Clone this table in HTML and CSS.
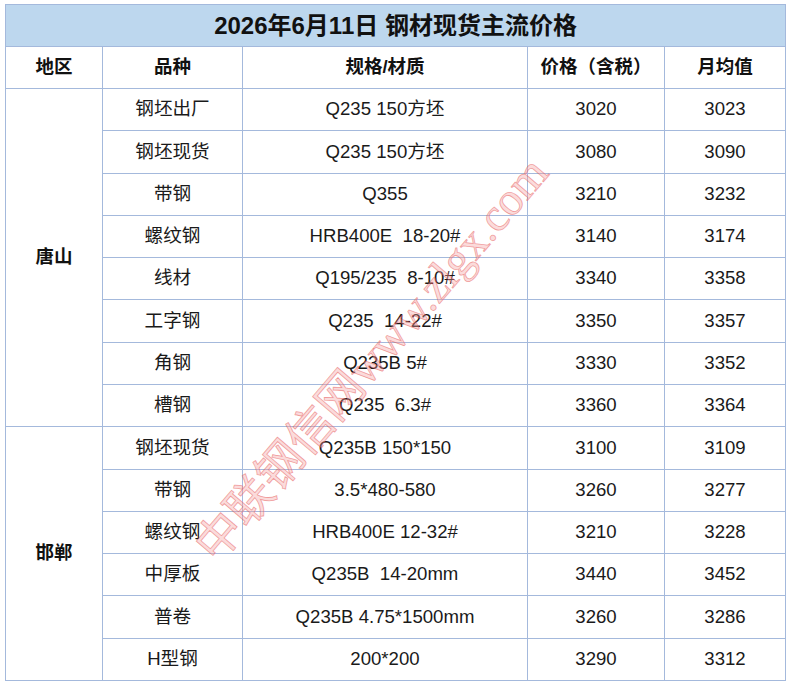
FILE: index.html
```html
<!DOCTYPE html>
<html lang="zh-CN">
<head>
<meta charset="utf-8">
<title>钢材现货主流价格</title>
<link rel="stylesheet" href="styles.css">
</head>
<body>
<div class="sheet">
  <table class="price-table">
    <colgroup>
      <col class="c-area"><col class="c-kind"><col class="c-spec"><col class="c-price"><col class="c-avg">
    </colgroup>
    <tr class="title-row"><td colspan="5">2026年6月11日 钢材现货主流价格</td></tr>
    <tr class="head-row"><td>地区</td><td>品种</td><td>规格/材质</td><td>价格（含税）</td><td>月均值</td></tr>
    <tr><td class="area" rowspan="8">唐山</td><td>钢坯出厂</td><td>Q235 150方坯</td><td>3020</td><td>3023</td></tr>
    <tr><td>钢坯现货</td><td>Q235 150方坯</td><td>3080</td><td>3090</td></tr>
    <tr><td>带钢</td><td>Q355</td><td>3210</td><td>3232</td></tr>
    <tr><td>螺纹钢</td><td>HRB400E  18-20#</td><td>3140</td><td>3174</td></tr>
    <tr><td>线材</td><td>Q195/235  8-10#</td><td>3340</td><td>3358</td></tr>
    <tr><td>工字钢</td><td>Q235  14-22#</td><td>3350</td><td>3357</td></tr>
    <tr><td>角钢</td><td>Q235B 5#</td><td>3330</td><td>3352</td></tr>
    <tr><td>槽钢</td><td>Q235  6.3#</td><td>3360</td><td>3364</td></tr>
    <tr><td class="area" rowspan="6">邯郸</td><td>钢坯现货</td><td>Q235B 150*150</td><td>3100</td><td>3109</td></tr>
    <tr><td>带钢</td><td>3.5*480-580</td><td>3260</td><td>3277</td></tr>
    <tr><td>螺纹钢</td><td>HRB400E 12-32#</td><td>3210</td><td>3228</td></tr>
    <tr><td>中厚板</td><td>Q235B  14-20mm</td><td>3440</td><td>3452</td></tr>
    <tr><td>普卷</td><td>Q235B 4.75*1500mm</td><td>3260</td><td>3286</td></tr>
    <tr><td>H型钢</td><td>200*200</td><td>3290</td><td>3312</td></tr>
  </table>
  <div class="watermark">中联钢信网www.zlgx.com</div>
</div>
</body>
</html>
```
FILE: styles.css
```css
html, body {
  margin: 0;
  padding: 0;
  background: #ffffff;
}

body {
  font-family: "Liberation Sans", "Noto Sans CJK SC", sans-serif;
  color: #1a1a1a;
}

.sheet {
  position: relative;
  padding: 4px 0 0 5px;
  width: 791px;
  height: 687px;
  box-sizing: border-box;
  overflow: hidden;
}

.price-table {
  border-collapse: collapse;
  table-layout: fixed;
  width: 780px;
}

.c-area { width: 97px; }
.c-kind { width: 140px; }
.c-spec { width: 285px; }
.c-price { width: 137px; }
.c-avg { width: 121px; }

.price-table td {
  border: 1px solid #a4b9dc;
  text-align: center;
  vertical-align: middle;
  padding: 0;
  height: 41.29px;
  font-size: 18.6px;
  white-space: pre;
  line-height: 1;
}

.title-row td {
  height: 41px;
  background: #bdd7ee;
  font-size: 24px;
  font-weight: bold;
  color: #111;
}

.head-row td {
  height: 41px;
  font-size: 18.5px;
  font-weight: bold;
  color: #111;
}

.price-table td.area {
  font-weight: bold;
  font-size: 18.5px;
  color: #111;
}

.watermark {
  position: absolute;
  left: 368px;
  top: 356px;
  transform: translate(-50%, -50%) rotate(-49.5deg);
  font-family: "Liberation Serif", "Noto Sans CJK SC", serif;
  font-size: 46.5px;
  white-space: nowrap;
  color: rgba(245, 160, 160, 0.4);
  -webkit-text-stroke: 0.8px rgba(228, 80, 80, 0.5);
  pointer-events: none;
}
```
